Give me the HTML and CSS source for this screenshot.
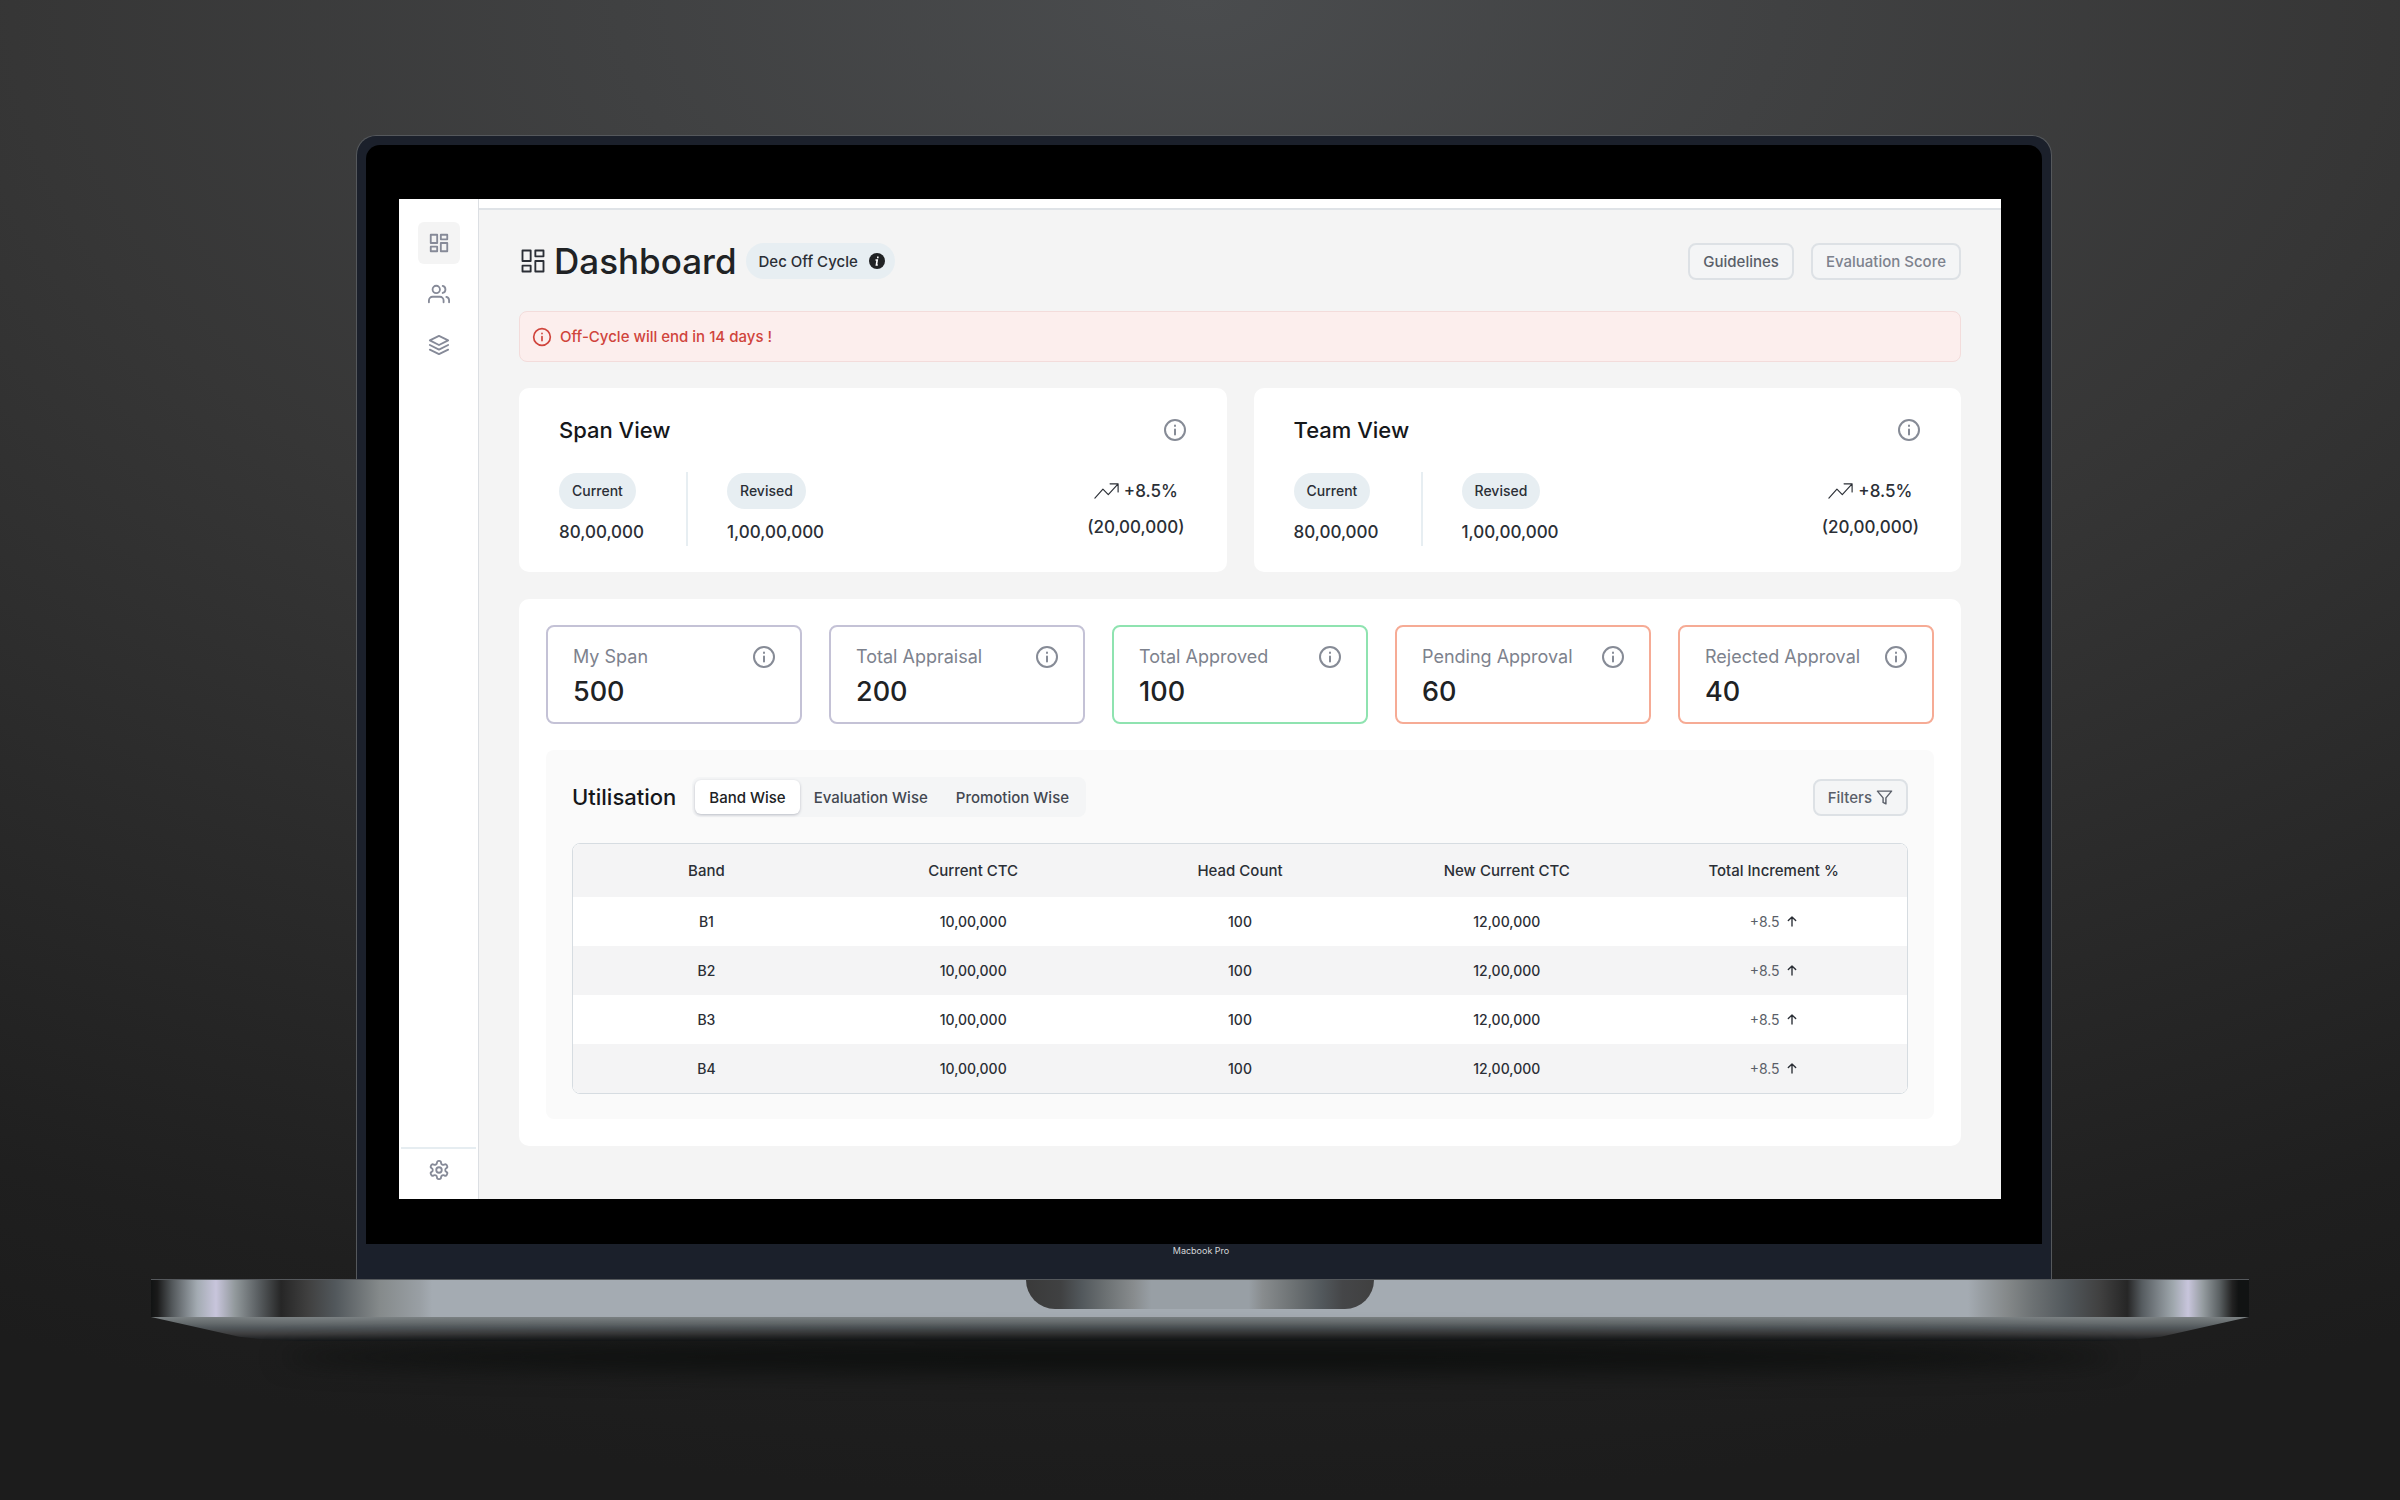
FILE: index.html
```html
<!DOCTYPE html>
<html lang="en">
<head>
  <meta charset="UTF-8">
  <meta name="viewport" content="width=device-width, initial-scale=1.0">
  <title>Dashboard</title>
  <link rel="stylesheet" href="styles.css">
</head>
<body>
  <!-- Shared icons -->
  <svg class="sprite" aria-hidden="true">
    <symbol id="icon-dashboard" viewBox="0 0 24 24">
      <path d="M3 3h7v9H3zM14 3h7v5h-7zM14 12h7v9h-7zM3 16h7v5H3z"/>
    </symbol>
    <symbol id="icon-users" viewBox="0 0 24 24">
      <path d="M17 21v-2a4 4 0 0 0-4-4H5a4 4 0 0 0-4 4v2"/>
      <circle cx="9" cy="7" r="4"/>
      <path d="M23 21v-2a4 4 0 0 0-3-3.87M16 3.13a4 4 0 0 1 0 7.75"/>
    </symbol>
    <symbol id="icon-layers" viewBox="0 0 24 24">
      <path d="M12 2 2 7l10 5 10-5zM2 12l10 5 10-5M2 17l10 5 10-5"/>
    </symbol>
    <symbol id="icon-settings" viewBox="0 0 24 24">
      <path d="M12.22 2h-.44a2 2 0 0 0-2 2v.18a2 2 0 0 1-1 1.73l-.43.25a2 2 0 0 1-2 0l-.15-.08a2 2 0 0 0-2.73.73l-.22.38a2 2 0 0 0 .73 2.73l.15.1a2 2 0 0 1 1 1.72v.51a2 2 0 0 1-1 1.74l-.15.09a2 2 0 0 0-.73 2.73l.22.38a2 2 0 0 0 2.73.73l.15-.08a2 2 0 0 1 2 0l.43.25a2 2 0 0 1 1 1.73V20a2 2 0 0 0 2 2h.44a2 2 0 0 0 2-2v-.18a2 2 0 0 1 1-1.73l.43-.25a2 2 0 0 1 2 0l.15.08a2 2 0 0 0 2.73-.73l.22-.39a2 2 0 0 0-.73-2.73l-.15-.08a2 2 0 0 1-1-1.74v-.5a2 2 0 0 1 1-1.74l.15-.09a2 2 0 0 0 .73-2.73l-.22-.38a2 2 0 0 0-2.73-.73l-.15.08a2 2 0 0 1-2 0l-.43-.25a2 2 0 0 1-1-1.73V4a2 2 0 0 0-2-2z"/>
      <circle cx="12" cy="12" r="3"/>
    </symbol>
    <symbol id="icon-info" viewBox="0 0 24 24">
      <circle cx="12" cy="12" r="10"/>
      <path d="M12 16.5v-5M12 7.5v.6"/>
    </symbol>
    <symbol id="icon-trend" viewBox="0 0 28 18">
      <path d="M1 17 10 7l6 6L27 1M18 1h9v9"/>
    </symbol>
    <symbol id="icon-filter" viewBox="0 0 24 24">
      <path d="M22 3H2l8 9.5V19l4 2v-8.5z"/>
    </symbol>
    <symbol id="icon-arrow" viewBox="0 0 12 12">
      <path d="M6 11V1M2 5l4-4 4 4"/>
    </symbol>
  </svg>

  <div class="laptop">
    <div class="lid">
      <div class="bezel">
        <div class="screen">
          <aside class="sidebar">
            <nav class="sidebar-nav">
              <a href="#" class="nav-item active" aria-label="Dashboard"><svg class="icon"><use href="#icon-dashboard"/></svg></a>
              <a href="#" class="nav-item" aria-label="Team"><svg class="icon"><use href="#icon-users"/></svg></a>
              <a href="#" class="nav-item" aria-label="Bands"><svg class="icon"><use href="#icon-layers"/></svg></a>
            </nav>
            <a href="#" class="nav-settings" aria-label="Settings"><svg class="icon"><use href="#icon-settings"/></svg></a>
          </aside>

          <div class="page">
            <div class="topbar"></div>
            <main class="content">
              <header class="page-header">
                <svg class="icon title-icon"><use href="#icon-dashboard"/></svg>
                <h1>Dashboard</h1>
                <span class="cycle">Dec Off Cycle
                  <svg class="cycle-icon" viewBox="0 0 16 16">
                    <circle cx="8" cy="8" r="8" fill="#202224"/>
                    <path d="M8.8 3.5v1.8M6.5 7h1.7L7.4 12h1.4" fill="none" stroke="#fff" stroke-width="1.6"/>
                  </svg>
                </span>
                <div class="header-actions">
                  <button type="button" class="btn btn-strong">Guidelines</button>
                  <button type="button" class="btn">Evaluation Score</button>
                </div>
              </header>

              <div class="alert">
                <svg class="icon"><use href="#icon-info"/></svg>
                Off-Cycle will end in 14 days !
              </div>

              <div class="views">
                <section class="view-card">
                  <div class="view-head">
                    <h2>Span View</h2>
                    <svg class="icon info"><use href="#icon-info"/></svg>
                  </div>
                  <div class="view-body">
                    <div class="amount"><span class="pill">Current</span><span>80,00,000</span></div>
                    <div class="amount divided"><span class="pill">Revised</span><span>1,00,00,000</span></div>
                    <div class="trend">
                      <span class="trend-rate"><svg class="icon"><use href="#icon-trend"/></svg>+8.5%</span>
                      <span>(20,00,000)</span>
                    </div>
                  </div>
                </section>
                <section class="view-card">
                  <div class="view-head">
                    <h2>Team View</h2>
                    <svg class="icon info"><use href="#icon-info"/></svg>
                  </div>
                  <div class="view-body">
                    <div class="amount"><span class="pill">Current</span><span>80,00,000</span></div>
                    <div class="amount divided"><span class="pill">Revised</span><span>1,00,00,000</span></div>
                    <div class="trend">
                      <span class="trend-rate"><svg class="icon"><use href="#icon-trend"/></svg>+8.5%</span>
                      <span>(20,00,000)</span>
                    </div>
                  </div>
                </section>
              </div>

              <section class="summary">
                <div class="stats">
                  <div class="stat">
                    <div class="stat-label">My Span <svg class="icon info"><use href="#icon-info"/></svg></div>
                    <div class="stat-value">500</div>
                  </div>
                  <div class="stat">
                    <div class="stat-label">Total Appraisal <svg class="icon info"><use href="#icon-info"/></svg></div>
                    <div class="stat-value">200</div>
                  </div>
                  <div class="stat approved">
                    <div class="stat-label">Total Approved <svg class="icon info"><use href="#icon-info"/></svg></div>
                    <div class="stat-value">100</div>
                  </div>
                  <div class="stat pending">
                    <div class="stat-label">Pending Approval <svg class="icon info"><use href="#icon-info"/></svg></div>
                    <div class="stat-value">60</div>
                  </div>
                  <div class="stat pending">
                    <div class="stat-label">Rejected Approval <svg class="icon info"><use href="#icon-info"/></svg></div>
                    <div class="stat-value">40</div>
                  </div>
                </div>

                <div class="utilisation">
                  <div class="utilisation-head">
                    <h2>Utilisation</h2>
                    <div class="tabs" role="tablist">
                      <button type="button" class="tab active" role="tab" aria-selected="true">Band Wise</button>
                      <button type="button" class="tab" role="tab" aria-selected="false">Evaluation Wise</button>
                      <button type="button" class="tab" role="tab" aria-selected="false">Promotion Wise</button>
                    </div>
                    <button type="button" class="btn btn-strong btn-filter">Filters <svg class="icon"><use href="#icon-filter"/></svg></button>
                  </div>
                  <div class="table-wrap">
                    <table>
                      <thead>
                        <tr><th>Band</th><th>Current CTC</th><th>Head Count</th><th>New Current CTC</th><th>Total Increment %</th></tr>
                      </thead>
                      <tbody>
                        <tr><td>B1</td><td>10,00,000</td><td>100</td><td>12,00,000</td><td class="increment">+8.5 <svg class="icon"><use href="#icon-arrow"/></svg></td></tr>
                        <tr><td>B2</td><td>10,00,000</td><td>100</td><td>12,00,000</td><td class="increment">+8.5 <svg class="icon"><use href="#icon-arrow"/></svg></td></tr>
                        <tr><td>B3</td><td>10,00,000</td><td>100</td><td>12,00,000</td><td class="increment">+8.5 <svg class="icon"><use href="#icon-arrow"/></svg></td></tr>
                        <tr><td>B4</td><td>10,00,000</td><td>100</td><td>12,00,000</td><td class="increment">+8.5 <svg class="icon"><use href="#icon-arrow"/></svg></td></tr>
                      </tbody>
                    </table>
                  </div>
                </div>
              </section>
            </main>
          </div>
        </div>
      </div>
      <div class="brand">Macbook Pro</div>
    </div>
    <div class="base"><div class="notch"></div></div>
    <div class="underside"></div>
    <div class="shadow"></div>
  </div>
</body>
</html>
```
FILE: styles.css
```css
* {
  box-sizing: border-box;
}
body {
  margin: 0;
  min-height: 100vh;
  font-family: Inter, 'Liberation Sans', sans-serif;
  font-size: 15px;
  color: #2b2f36;
  background: #1c1c1c radial-gradient(ellipse 110% 100% at 50% 0%, #4a4c4e 0%, #404142 22%, #363636 45%, #2a2a2a 68%, #1f1f1f 90%, #1c1c1c 100%) no-repeat;
}
h1, h2 {
  margin: 0;
  font-weight: 500;
}
button {
  font-family: inherit;
  cursor: pointer;
}
.sprite {
  display: none;
}
.icon {
  flex-shrink: 0;
  width: 22px;
  height: 22px;
  fill: none;
  stroke: currentColor;
  stroke-width: 2;
  stroke-linecap: round;
  stroke-linejoin: round;
}

/* Laptop */
.laptop {
  padding: 135px 151px 0;
}
.lid {
  margin: 0 197px 0 205px;
  padding: 9px 9px 0;
  background-color: #1b202b;
  border: 1px solid #55585c;
  border-bottom: none;
  border-radius: 20px 20px 0 0;
}
.bezel {
  padding: 54px 41px 45px 33px;
  background-color: #000;
  border-radius: 14px 14px 0 0;
}
.brand {
  height: 35px;
  padding: 1px 6px 0 0;
  color: #d5d7da;
  font-size: 9px;
  line-height: 12px;
  text-align: center;
}
.base {
  height: 38px;
  border-top: 1px solid #55585c;
  background: linear-gradient(90deg, #111313 0%, #1a1a1a 0.3%, #52575a 1%, #a3abb2 2.2%, #c8c5dc 3.1%, #92999c 4%, #5a5f62 5.1%, #262626 6.2%, #404040 7.5%, #52585c 8.8%, #858a8b 10.9%, #999fa4 12.8%, #a4abb2 13.4%, #a4abb2 86.6%, #999fa4 87.2%, #848889 88.5%, #6c7173 89.7%, #52585c 91.3%, #404040 92.9%, #262626 94.2%, #565c60 94.9%, #a0a8ae 96.4%, #c8c5dc 97.1%, #959ca0 97.8%, #5a6062 98.6%, #222 99.2%, #111313 99.5%);
}
.notch {
  width: 348px;
  height: 29px;
  margin: 0 auto;
  border-radius: 0 0 32px 32px;
  background: linear-gradient(90deg, #3a3a3a 0%, #404142 10%, #52585c 16%, #6c7173 23%, #888c8e 31%, #989fa5 36%, #989fa5 64%, #888c8e 68%, #6c7173 77%, #52585c 85%, #454648 91%, #404040 100%);
}
.underside {
  height: 24px;
  background: linear-gradient(#7b8183, #666c6e 25%, #50565a 45%, #3e3e3f 70%, #15181a);
  clip-path: polygon(0 0, 100% 0, 95.8% 82%, 94.6% 94%, 93% 100%, 7% 100%, 5.4% 94%, 4.2% 82%);
}
.shadow {
  height: 32px;
  margin: 0 130px;
  background-color: #0d0f0e;
  border-radius: 50%;
  filter: blur(12px);
}

/* App shell */
.screen {
  display: flex;
  background-color: #f4f4f4;
}
.sidebar {
  display: flex;
  flex-direction: column;
  flex-shrink: 0;
  width: 80px;
  background-color: #fff;
  border-right: 1px solid #dcdfe3;
  color: #868a98;
}
.sidebar-nav {
  display: flex;
  flex: 1;
  flex-direction: column;
  align-items: center;
  gap: 9px;
  padding-top: 23px;
}
.nav-item {
  display: flex;
  align-items: center;
  justify-content: center;
  width: 42px;
  height: 42px;
  border-radius: 6px;
  color: inherit;
}
.nav-item.active {
  background-color: #f4f4f4;
}
.nav-settings {
  display: flex;
  align-items: center;
  justify-content: center;
  height: 52px;
  margin: 0 2px;
  padding-bottom: 8px;
  border-top: 2px solid #e6edf1;
  color: inherit;
}
.page {
  flex: 1;
  min-width: 0;
}
.topbar {
  height: 11px;
  background-color: #fff;
  border-bottom: 2px solid #dfe3e7;
}
.content {
  padding: 32px 40px 53px;
}

/* Page header */
.page-header {
  display: flex;
  align-items: center;
  height: 38px;
  margin-bottom: 31px;
}
.title-icon {
  width: 28px;
  height: 28px;
  stroke-width: 1.6;
}
h1 {
  margin-left: 7px;
  color: #202224;
  font-size: 35px;
  line-height: 38px;
}
.cycle {
  display: flex;
  align-items: center;
  gap: 11px;
  height: 36px;
  margin-left: 9px;
  padding: 0 10px 0 13px;
  background-color: #e7eef2;
  border-radius: 18px;
  font-weight: 500;
}
.cycle-icon {
  width: 16px;
  height: 16px;
}
.header-actions {
  display: flex;
  gap: 17px;
  margin-left: auto;
}
.btn {
  height: 37px;
  padding: 0 13px;
  background-color: #f4f5f6;
  border: 2px solid #dde1e5;
  border-radius: 8px;
  color: #7d828d;
  font-size: 15px;
  font-weight: 500;
}
.btn-strong {
  color: #5a5f69;
}
.alert {
  display: flex;
  align-items: center;
  gap: 8px;
  height: 51px;
  margin-bottom: 26px;
  padding: 0 12px;
  background-color: #fceeed;
  border: 1px solid #f3dcdb;
  border-radius: 8px;
  color: #d0443c;
  font-weight: 500;
}
.alert .icon {
  width: 20px;
  height: 20px;
}

/* Span and team cards */
.views {
  display: grid;
  grid-template-columns: 1fr 1fr;
  gap: 27px;
  margin-bottom: 27px;
}
.view-card {
  padding: 28px 40px 26px;
  background-color: #fff;
  border-radius: 10px;
}
.view-head {
  display: flex;
  align-items: center;
  justify-content: space-between;
  margin-bottom: 28px;
}
h2 {
  color: #15171a;
  font-size: 22px;
  line-height: 28px;
}
.info {
  width: 24px;
  height: 24px;
  color: #868b96;
}
.view-body {
  display: flex;
  font-size: 17px;
  font-weight: 500;
}
.amount {
  display: flex;
  flex-direction: column;
  align-items: flex-start;
  gap: 10px;
  padding: 1px 0;
  line-height: 26px;
}
.amount.divided {
  margin-left: 42px;
  padding-left: 39px;
  border-left: 2px solid #e7eef2;
}
.pill {
  padding: 0 13px;
  background-color: #e7eef2;
  border-radius: 18px;
  font-size: 14px;
  line-height: 36px;
}
.trend {
  display: flex;
  flex-direction: column;
  align-items: center;
  margin-left: auto;
  padding: 1px 2px 0;
  line-height: 36px;
}
.trend-rate {
  display: flex;
  align-items: center;
  gap: 5px;
}
.trend .icon {
  width: 25px;
  height: 18px;
  stroke-width: 1.3;
}

/* Summary */
.summary {
  padding: 26px 27px 27px;
  background-color: #fff;
  border-radius: 10px;
}
.stats {
  display: grid;
  grid-template-columns: repeat(5, 1fr);
  gap: 27px;
  margin-bottom: 26px;
}
.stat {
  padding: 17px 24px 12px 25px;
  border: 2px solid #c4c2d6;
  border-radius: 8px;
}
.stat.approved {
  border-color: #8fe3b0;
}
.stat.pending {
  border-color: #f6ab95;
}
.stat-label {
  display: flex;
  align-items: center;
  justify-content: space-between;
  margin-bottom: 4px;
  color: #7d828d;
  font-size: 18px;
  line-height: 26px;
}
.stat-value {
  color: #202224;
  font-size: 27px;
  font-weight: 500;
  line-height: 36px;
}
.utilisation {
  padding: 27px 26px 25px;
  background-color: #fafafa;
  border-radius: 8px;
}
.utilisation-head {
  display: flex;
  align-items: center;
  margin-bottom: 26px;
}
.tabs {
  display: flex;
  height: 40px;
  margin-left: 16px;
  padding: 3px;
  background-color: #f4f5f6;
  border-radius: 8px;
}
.tab {
  padding: 0 14px;
  background: none;
  border: none;
  border-radius: 6px;
  color: #434851;
  font-size: 15px;
  font-weight: 500;
}
.tab.active {
  background-color: #fff;
  box-shadow: 0 1px 3px #b9bcc4;
  color: #202224;
}
.btn-filter {
  display: flex;
  align-items: center;
  gap: 4px;
  margin-left: auto;
}
.btn-filter .icon {
  width: 17px;
  height: 17px;
}
.table-wrap {
  overflow: hidden;
  border: 1px solid #d6dce1;
  border-radius: 8px;
}
table {
  width: 100%;
  table-layout: fixed;
  border-collapse: collapse;
  background-color: #fff;
}
th, td {
  padding: 0;
  text-align: center;
  font-weight: 500;
}
th {
  height: 53px;
  background-color: #f4f4f5;
  font-size: 15px;
}
td {
  height: 49px;
  font-size: 14px;
}
tbody tr:nth-child(even) {
  background-color: #f4f4f5;
}
.increment {
  color: #5a5f69;
  font-weight: 400;
}
.increment .icon {
  width: 12px;
  height: 11px;
  margin-left: 2px;
  color: #2b2f36;
  stroke-width: 1.5;
}
```
